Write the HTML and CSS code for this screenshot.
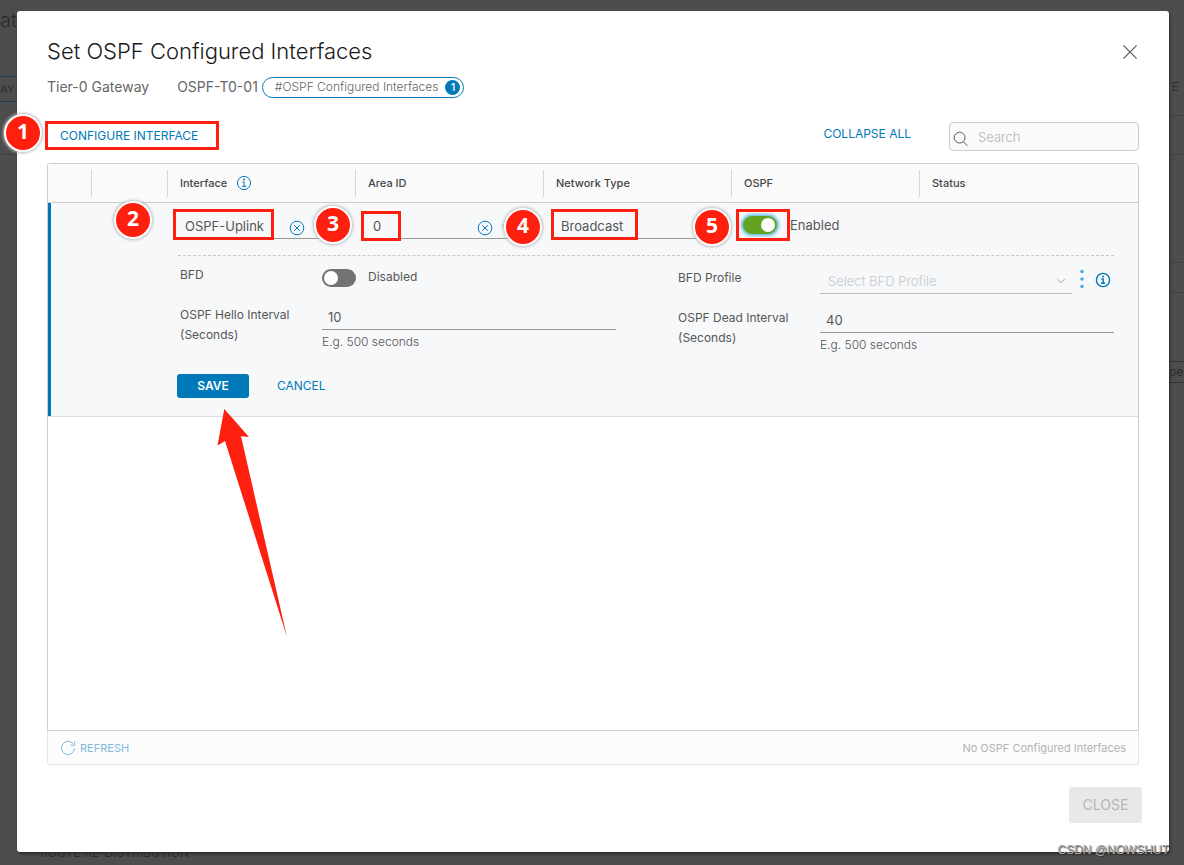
FILE: index.html
```html
<!DOCTYPE html>
<html lang="en">
<head>
<meta charset="utf-8">
<title>Set OSPF Configured Interfaces</title>
<link rel="stylesheet" href="styles.css">
</head>
<body>
<svg class="symbols" aria-hidden="true">
  <symbol id="info" viewBox="0 0 16 16"><circle cx="8" cy="8" r="6.6"/><path d="M6.4 7h1.8v4.2M6 11.3h4.2"/><circle class="dot" cx="8" cy="4.6" r="1"/></symbol>
  <symbol id="clear" viewBox="0 0 16 16"><circle cx="8" cy="8" r="6.8"/><path d="M5.2 5.2l5.6 5.6M10.8 5.2l-5.6 5.6"/></symbol>
  <symbol id="chevron" viewBox="0 0 10 10"><path d="M1.3 3L5 6.7 8.7 3"/></symbol>
</svg>

<div class="backdrop" aria-hidden="true">
  <span class="ghost ghost-title">at</span>
  <span class="ghost ghost-button">AY</span>
  <span class="ghost ghost-collapse">E</span>
  <span class="ghost ghost-line line-left"></span>
  <span class="ghost ghost-line line-a"></span>
  <span class="ghost ghost-line line-b"></span>
  <span class="ghost ghost-line line-c"></span>
  <span class="ghost ghost-line line-d"></span>
  <span class="ghost ghost-field">pe</span>
  <span class="ghost ghost-section">ROUTE RE-DISTRIBUTION</span>
</div>

<main class="dialog" role="dialog" aria-labelledby="title">
  <header class="dialog-head">
    <h1 id="title">Set OSPF Configured Interfaces</h1>
    <button class="icon-button" type="button" aria-label="Close dialog">
      <svg class="close-icon" viewBox="0 0 16 16"><path d="M1.4 1.4l13.2 13.2M14.6 1.4L1.4 14.6"/></svg>
    </button>
  </header>
  <div class="context">
    <span class="context-type">Tier-0 Gateway</span>
    <span>OSPF-T0-01</span>
    <span class="chip">#OSPF Configured Interfaces <b class="chip-count">1</b></span>
  </div>

  <div class="toolbar">
    <div class="marked configure">
      <button class="link-button" type="button">CONFIGURE INTERFACE</button>
      <span class="frame frame-configure"></span><span class="step step-1">1</span>
    </div>
    <div class="tools">
      <button class="link-button" type="button">COLLAPSE ALL</button>
      <label class="search">
        <svg class="search-icon" viewBox="0 0 16 16"><circle cx="6.6" cy="6.6" r="5.4"/><path d="M10.6 11l3.8 3.8"/></svg>
        <input type="search" placeholder="Search" aria-label="Search">
      </label>
    </div>
  </div>

  <section class="grid">
    <table>
      <colgroup><col class="col-a"><col class="col-b"><col class="col-data"><col class="col-data"><col class="col-data"><col class="col-data"><col></colgroup>
      <thead>
        <tr>
          <th><div class="head-cell first"></div></th>
          <th><div class="head-cell"></div></th>
          <th><div class="head-cell">Interface <svg class="info"><use href="#info"/></svg></div></th>
          <th><div class="head-cell">Area ID</div></th>
          <th><div class="head-cell">Network Type</div></th>
          <th><div class="head-cell">OSPF</div></th>
          <th><div class="head-cell">Status</div></th>
        </tr>
      </thead>
      <tbody>
        <tr class="edit-row">
          <td></td>
          <td></td>
          <td>
            <div class="field marked">
              <input type="text" value="OSPF-Uplink" aria-label="Interface">
              <button class="clear" type="button" aria-label="Clear interface"><svg><use href="#clear"/></svg></button>
              <svg class="chevron"><use href="#chevron"/></svg>
              <span class="frame frame-interface"></span><span class="step step-2">2</span>
            </div>
          </td>
          <td>
            <div class="field marked">
              <input type="text" value="0" aria-label="Area ID">
              <button class="clear" type="button" aria-label="Clear area"><svg><use href="#clear"/></svg></button>
              <svg class="chevron"><use href="#chevron"/></svg>
              <span class="frame frame-area"></span><span class="step step-3">3</span>
            </div>
          </td>
          <td>
            <div class="field marked">
              <select aria-label="Network Type"><option>Broadcast</option></select>
              <span class="frame frame-network"></span><span class="step step-4">4</span>
            </div>
          </td>
          <td>
            <label class="switch-field marked">
              <input class="switch focused" type="checkbox" checked>
              <span>Enabled</span>
              <span class="frame frame-ospf"></span><span class="step step-5">5</span>
            </label>
          </td>
          <td></td>
        </tr>
        <tr class="detail-row">
          <td colspan="2"></td>
          <td colspan="5">
            <div class="detail">
              <div class="detail-column">
                <div class="form-row short">
                  <label for="bfd">BFD</label>
                  <div class="switch-line"><input class="switch" id="bfd" type="checkbox"><span>Disabled</span></div>
                </div>
                <div class="form-row">
                  <label for="hello">OSPF Hello Interval<br>(Seconds)</label>
                  <div><input class="line-input" id="hello" type="text" value="10"><p class="hint">E.g. 500 seconds</p></div>
                </div>
              </div>
              <div class="detail-column lower">
                <div class="form-row short">
                  <label for="profile">BFD Profile</label>
                  <div class="profile-line">
                    <div class="profile-select">
                      <select class="line-input" id="profile" disabled><option>Select BFD Profile</option></select>
                      <svg class="chevron"><use href="#chevron"/></svg>
                    </div>
                    <button class="more" type="button" aria-label="More"><svg viewBox="0 0 4 20"><circle cx="2" cy="2.5" r="1.8"/><circle cx="2" cy="10" r="1.8"/><circle cx="2" cy="17.5" r="1.8"/></svg></button>
                    <svg class="info strong"><use href="#info"/></svg>
                  </div>
                </div>
                <div class="form-row">
                  <label for="dead">OSPF Dead Interval<br>(Seconds)</label>
                  <div><input class="line-input" id="dead" type="text" value="40"><p class="hint">E.g. 500 seconds</p></div>
                </div>
              </div>
            </div>
            <div class="actions">
              <span class="marked">
                <button class="save" type="button">SAVE</button>
                <svg class="arrow" viewBox="0 0 71 230"><path d="M7.300 0L32 28 24 27.300 70 228 8 32 0.500 36.500z"/></svg>
              </span>
              <button class="link-button" type="button">CANCEL</button>
            </div>
          </td>
        </tr>
      </tbody>
    </table>
  </section>
  <div class="grid-foot">
    <button class="refresh" type="button">
      <svg viewBox="0 0 16 16"><path d="M14.6 8.600A6.600 6.600 0 1 1 13 3.600M14.700 1v4.200h-4.200"/></svg>
      REFRESH
    </button>
    <span>No OSPF Configured Interfaces</span>
  </div>

  <footer class="dialog-foot">
    <button class="close" type="button" disabled>CLOSE</button>
  </footer>
</main>
<span class="watermark">CSDN @NOWSHUT</span>
</body>
</html>
```

FILE: styles.css
```css
* { box-sizing: border-box; }

body {
  margin: 0;
  min-height: 100vh;
  padding: 11px 15px 13px 17px;
  display: flex;
  position: relative;
  overflow-x: hidden;
  background: #4d4d4e;
  color: #565656;
  font: 13px/20px Inter, "Open Sans", sans-serif;
}

button, input, select { font: inherit; color: inherit; }
button { padding: 0; border: 0; background: none; }
svg { fill: none; stroke: currentColor; stroke-width: 1; flex: none; }
.symbols { position: absolute; width: 0; height: 0; }
.dot { fill: currentColor; stroke: none; }

/* page behind the dialog */
.backdrop { position: absolute; inset: 0; overflow: hidden; color: #2b2b2b; }
.ghost { position: absolute; white-space: nowrap; }
.ghost-title { left: 0; top: 8px; font-size: 20px; font-weight: 300; line-height: 24px; }
.ghost-button { left: 0; top: 76px; width: 17px; padding: 2px 0; border: 1px solid #1f3a4a; border-width: 1px 0; font-size: 11px; color: #26323a; }
.ghost-collapse { right: 5px; top: 77px; font-size: 12px; color: #26323a; }
.ghost-line { height: 1px; background: #414141; }
.line-left { left: 0; top: 154px; width: 17px; }
.line-a { right: 0; top: 115px; width: 15px; }
.line-b { right: 0; top: 154px; width: 15px; }
.line-c { right: 0; top: 262px; width: 15px; }
.line-d { right: 0; top: 292px; width: 15px; }
.ghost-field { right: 0; top: 361px; width: 15px; border: 1px solid #303030; border-width: 1px 0; font-size: 12px; }
.ghost-section { left: 40px; bottom: 2px; font-size: 12px; }

.dialog {
  position: relative;
  flex: 1;
  min-width: 0;
  display: flex;
  flex-direction: column;
  padding: 26px 30px 29px;
  border-radius: 3px;
  background: #fff;
  box-shadow: 1px 2px 3px #2c2c2c;
}

.dialog-head { display: flex; justify-content: space-between; align-items: center; }
h1 { margin: 0; font-size: 22px; font-weight: 300; line-height: 28px; color: #1a1a1a; }
.icon-button { display: flex; margin: 1px 1px 0 0; }
.close-icon { width: 16px; height: 16px; stroke-width: 1.2; }

.context { display: flex; align-items: center; margin-top: 10px; height: 24px; font-size: 14px; color: #666; }
.context-type { margin-right: 28px; }
.chip {
  display: flex;
  align-items: center;
  gap: 7px;
  height: 21px;
  margin-left: 4px;
  padding: 0 3px 0 12px;
  border: 1px solid #0079b8;
  border-radius: 11px;
  font-size: 12px;
  font-weight: 300;
}
.chip-count {
  width: 15px;
  height: 15px;
  border-radius: 50%;
  background: #0079b8;
  color: #fff;
  font-size: 11px;
  font-weight: 500;
  line-height: 15px;
  text-align: center;
}

.toolbar { display: flex; justify-content: space-between; margin: 23px 0 12px; }
.configure { align-self: flex-start; padding: 3px 21px 3px 13px; }
.link-button { font-size: 12px; line-height: 20px; color: #0079b8; }
.tools { display: flex; align-items: flex-start; gap: 38px; }
.tools .link-button { margin-top: 2px; }
.search {
  display: flex;
  align-items: center;
  gap: 9px;
  width: 190px;
  height: 29px;
  padding: 0 3px;
  border: 1px solid #ccc;
  border-radius: 4px;
  background: #fafafa;
}
.search-icon { width: 16px; height: 16px; margin-top: 4px; }
.search input { width: 100%; padding: 0; border: 0; outline: 0; background: none; }
.search input::placeholder { color: #b5b5b5; font-weight: 300; }

.grid { flex: 1; border: 1px solid #ccc; border-radius: 3px 3px 0 0; }
table { width: 100%; table-layout: fixed; border-collapse: separate; border-spacing: 0; }
.col-a { width: 43px; }
.col-b { width: 76px; }
.col-data { width: 188px; }
th { height: 39px; padding: 0; border-bottom: 1px solid #ccc; background: #fafafa; font-size: 11px; font-weight: 500; text-align: left; color: #454545; }
.head-cell { display: flex; align-items: center; gap: 9px; height: 27px; padding-left: 12px; border-left: 1px solid #d6d6d6; }
.head-cell.first { border-left: 0; }
.info { width: 16px; height: 16px; color: #0079b8; }
.info.strong { stroke-width: 1.4; }

td { padding: 0; background: #f7f8fa; vertical-align: top; }
td:first-child { box-shadow: inset 3px 0 #0079b8; }
.edit-row td { height: 52px; padding: 6px 24px 0 10px; }
.marked { position: relative; }
.field input, .field select {
  display: block;
  width: 100%;
  height: 30px;
  padding: 5px 8px 0;
  border: 0;
  border-bottom: 1px solid #999;
  border-radius: 0;
  outline: 0;
  background: none;
  appearance: none;
}
.clear { position: absolute; right: 26px; top: 11px; color: #0079b8; }
.clear svg { display: block; width: 16px; height: 16px; }
.chevron { position: absolute; width: 10px; height: 10px; right: 9px; top: 12px; color: #9aa5ab; }
.edit-row .switch-field { display: flex; align-items: center; gap: 13px; width: 110px; height: 32px; padding-left: 2px; }
.edit-row .switch-field span { white-space: nowrap; }

.switch { position: relative; flex: none; width: 34px; height: 18px; margin: 0; border-radius: 9px; background: #737373; appearance: none; }
.switch::after { content: ""; position: absolute; left: 2px; top: 2px; width: 14px; height: 14px; border-radius: 50%; background: #fff; }
.switch:checked { background: #62a420; }
.switch:checked::after { left: 18px; }
.focused { box-shadow: 0 0 3px 2px #6bc1e3; }

.detail-row > td { border-bottom: 1px solid #ddd; }
.detail-row > td:last-child { padding: 0 24px 18px 11px; }
.detail { display: grid; grid-template-columns: 1fr 1fr; gap: 60px; border-top: 1px dashed #c8c8c8; }
.detail-column { padding: 9px 0 0 2px; }
.detail-column.lower { padding-top: 12px; }
.form-row { display: grid; grid-template-columns: 142px 1fr; font-size: 12px; }
.form-row.short { height: 40px; }
.switch-line { display: flex; gap: 12px; padding-top: 4px; font-size: 12px; }
.switch-line span { line-height: 16px; }
.line-input {
  display: block;
  width: 100%;
  height: 25px;
  padding: 0 6px;
  border: 0;
  border-bottom: 1px solid #999;
  border-radius: 0;
  outline: 0;
  background: none;
  font-size: 13px;
  appearance: none;
}
.line-input:disabled { padding-left: 8px; border-color: #bbb; color: #c4c9cc; opacity: 1; font-weight: 300; }
.hint { margin: 4px 0 0; font-size: 12px; font-weight: 300; line-height: 16px; }
.profile-line { display: flex; align-items: flex-start; padding-top: 1px; }
.profile-select { position: relative; flex: 1; }
.profile-select .chevron { right: 6px; top: 7px; }
.more { display: flex; margin: 0 11px 0 8px; color: #49afd9; }
.more svg { width: 4px; height: 20px; fill: currentColor; stroke: none; }
.profile-line .info { margin: 3px 3px 0 0; }

.actions { display: flex; align-items: center; gap: 28px; margin: 21px 0 0 -1px; }
.save { display: block; width: 72px; height: 24px; border-radius: 3px; background: #0079b8; color: #fff; font-size: 12px; font-weight: 600; }

.grid-foot {
  display: flex;
  align-items: center;
  justify-content: space-between;
  height: 34px;
  padding: 0 12px;
  border: 1px solid #e4e4e4;
  border-top: 0;
  border-radius: 0 0 3px 3px;
  background: #fcfcfc;
  color: #b3b3b3;
  font-size: 11px;
}
.refresh { display: flex; align-items: center; gap: 4px; color: #7fbbdb; }
.refresh svg { width: 16px; height: 16px; }

.dialog-foot { display: flex; justify-content: flex-end; margin: 22px -3px 0 0; }
.close { width: 73px; height: 36px; border-radius: 3px; background: #e8e8e8; color: #b5b5b5; font-size: 14px; }

/* step annotations */
.frame { position: absolute; border: 3px solid #ff1f0f; pointer-events: none; }
.frame-configure { inset: -1px 0 -1px -2px; }
.frame-interface { left: -4px; top: 0; width: 101px; height: 31px; }
.frame-area { left: -4px; top: 2px; width: 40px; height: 30px; }
.frame-network { left: -2px; top: 0; width: 87px; height: 31px; }
.frame-ospf { left: -5px; top: 0; width: 54px; height: 32px; }
.step {
  position: absolute;
  z-index: 1;
  width: 38px;
  height: 38px;
  border: 2px solid #fff;
  border-radius: 50%;
  background: #ff1f0f;
  box-shadow: 0 0 3px 1px #bbb;
  color: #fff;
  font: bold 21px/30px "Open Sans", sans-serif;
  text-align: center;
}
.step-1 { left: -43px; top: -8px; }
.step-2 { left: -63px; top: -8px; }
.step-3 { left: -51px; top: -3px; }
.step-4 { left: -49px; top: -1px; }
.step-5 { left: -48px; top: -1px; }
.arrow { position: absolute; left: 40px; top: 35px; width: 71px; height: 230px; fill: #ff1f0f; stroke: none; pointer-events: none; }

.watermark { position: absolute; right: 15px; bottom: 5px; color: #aaa; text-shadow: 1px 1px 1px #333; font: 12px/20px "Liberation Sans", sans-serif; }
```
